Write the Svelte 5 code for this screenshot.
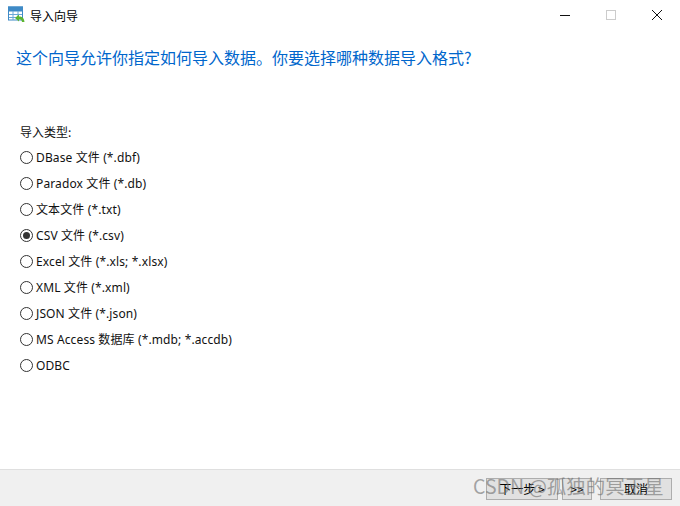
<script>
  const formats = [
    { label: "DBase 文件 (*.dbf)" },
    { label: "Paradox 文件 (*.db)" },
    { label: "文本文件 (*.txt)" },
    { label: "CSV 文件 (*.csv)", checked: true },
    { label: "Excel 文件 (*.xls; *.xlsx)" },
    { label: "XML 文件 (*.xml)" },
    { label: "JSON 文件 (*.json)" },
    { label: "MS Access 数据库 (*.mdb; *.accdb)" },
    { label: "ODBC" }
  ];
</script>

<div class="window">
  <header class="titlebar">
    <svg class="app-icon" width="18" height="18" viewBox="0 0 18 18">
      <rect x="0.5" y="1" width="14" height="13" fill="#fff" stroke="#3f8ac6" />
      <rect x="0.5" y="1" width="14" height="4" fill="#3f8ac6" stroke="#3f8ac6" />
      <path d="M1 8.500h13M1 11.500h13M5 5v9M10 5v9" stroke="#6aa8d8" fill="none" />
      <path d="M7 12l4-3.500v2c3.500 0 5 1.500 5.500 5.500h-2.500c-.3-2-1-2.700-3-2.700v2.200z" fill="#5cb531" />
    </svg>
    <span class="title">导入向导</span>
    <div class="controls">
      <span class="ctl"><i class="min"></i></span>
      <span class="ctl"><i class="max"></i></span>
      <span class="ctl">
        <svg width="12" height="12" viewBox="0 0 12 12"><path d="M1 1l10 10M11 1L1 11" stroke="#111" fill="none" /></svg>
      </span>
    </div>
  </header>

  <main class="content">
    <h1>这个向导允许你指定如何导入数据。你要选择哪种数据导入格式?</h1>
    <p class="group-label">导入类型:</p>
    <ul class="options">
      {#each formats as f}
        <li>
          <span class="radio" class:checked={f.checked}></span>
          <span>{f.label}</span>
        </li>
      {/each}
    </ul>
  </main>

  <footer class="footer">
    <button class="wide">下一步 &gt;</button>
    <button class="narrow">&gt;&gt;</button>
    <button class="wide cancel">取消</button>
  </footer>

  <div class="watermark">CSDN @孤独的冥王星</div>
</div>

<style>
  :global(body) {
    margin: 0;
    background: #fff;
  }

  .window {
    position: relative;
    width: 680px;
    height: 506px;
    display: flex;
    flex-direction: column;
    overflow: hidden;
    background: #fff;
    color: #111;
    font-family: "Noto Sans", "Noto Sans CJK SC", sans-serif;
    font-size: 12px;
  }

  .titlebar {
    height: 30px;
    display: flex;
    align-items: center;
    padding-left: 8px;
    flex: none;
  }

  .app-icon {
    margin-right: 4px;
  }

  .title {
    color: #000;
    font-family: "Noto Sans CJK SC", sans-serif;
    font-size: 12px;
  }

  .controls {
    margin-left: auto;
    display: flex;
  }

  .ctl {
    width: 46px;
    height: 30px;
    display: flex;
    align-items: center;
    justify-content: center;
  }

  .min {
    width: 10px;
    height: 1px;
    background: #111;
  }

  .max {
    width: 8px;
    height: 8px;
    border: 1px solid #ccc;
  }

  .content {
    flex: 1;
    padding: 0 20px;
  }

  h1 {
    margin: 15px 0 0 -4px;
    font-size: 16px;
    font-weight: 400;
    line-height: 24px;
    color: #0066cc;
    font-family: "Noto Sans CJK SC", sans-serif;
  }

  .group-label {
    margin: 54px 0 0;
    line-height: 18px;
    font-family: "Noto Sans CJK SC", sans-serif;
  }

  .options {
    list-style: none;
    margin: 3px 0 0;
    padding: 0;
    letter-spacing: 0.12px;
  }

  li {
    height: 26px;
    display: flex;
    align-items: center;
    gap: 3px;
  }

  .radio {
    box-sizing: border-box;
    width: 13px;
    height: 13px;
    border: 1px solid #333;
    border-radius: 50%;
    background: #fff;
    display: flex;
    align-items: center;
    justify-content: center;
  }

  .radio.checked::after {
    content: "";
    width: 7px;
    height: 7px;
    border-radius: 50%;
    background: #333;
  }

  .footer {
    flex: none;
    box-sizing: border-box;
    height: 37px;
    background: #f0f0f0;
    border-top: 1px solid #dfdfdf;
    display: flex;
    justify-content: flex-end;
    align-items: flex-start;
    padding: 8px 8px 0 0;
  }

  button {
    box-sizing: border-box;
    height: 22px;
    padding: 0;
    border: 1px solid #adadad;
    background: #e1e1e1;
    color: #000;
    font-family: "Noto Sans CJK SC", sans-serif;
    font-size: 12px;
    line-height: 18px;
  }

  .wide {
    width: 72px;
  }

  .narrow {
    width: 30px;
    margin-left: 4px;
  }

  .cancel {
    margin-left: 8px;
  }

  .watermark {
    position: absolute;
    left: 473px;
    top: 472px;
    color: rgba(110, 110, 110, 0.6);
    font-family: "Noto Sans CJK SC", sans-serif;
    font-size: 19.5px;
    line-height: 28px;
    white-space: nowrap;
    pointer-events: none;
  }
</style>
